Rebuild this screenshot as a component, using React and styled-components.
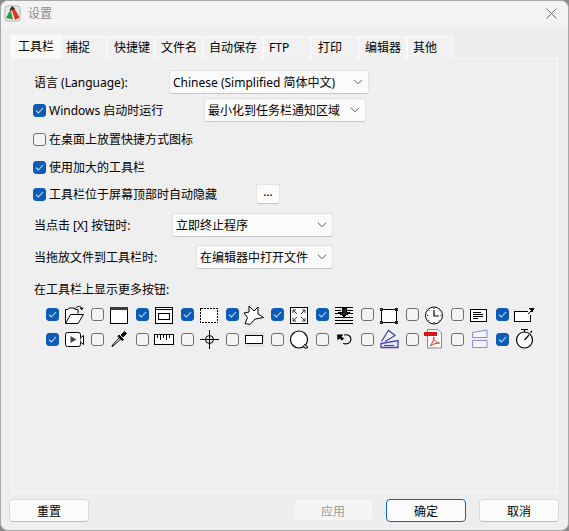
import React from "react";
import styled, { createGlobalStyle } from "styled-components";

const GlobalStyle = createGlobalStyle`
  html, body {
    margin: 0;
    padding: 0;
    height: 100%;
    background: #8a8a8a;
    overflow: hidden;
  }
  * { box-sizing: border-box; }
`;

const Dialog = styled.div`
  width: 569px;
  height: 531px;
  display: flex;
  flex-direction: column;
  background: #eeeeee;
  border: 1px solid #a8a8a8;
  border-radius: 8px;
  overflow: hidden;
  color: #000;
  font-family: "Noto Sans", "Noto Sans CJK SC", sans-serif;
  font-size: 12px;
`;

const TitleBar = styled.div`
  height: 26px;
  flex: none;
  display: flex;
  align-items: center;
  padding: 0 11px 2px 3px;
  gap: 7px;
  background: #f3f3f3;
`;

const TitleText = styled.span`
  color: #8c8c8c;
  font-size: 12px;
  flex: 1;
`;

const Tabs = styled.div`
  display: flex;
  height: 24px;
  margin-top: 8px;
  padding-left: 9px;
  flex: none;
  position: relative;
  z-index: 1;
`;

const Tab = styled.div`
  width: ${(p) => p.$w}px;
  height: ${(p) => (p.$active ? 24 : 23)}px;
  padding-left: ${(p) => p.$pad}px;
  padding-top: 2px;
  line-height: 18px;
  margin-top: ${(p) => (p.$active ? 0 : 1)}px;
  background: ${(p) => (p.$active ? "#f9f9f9" : "#f1f1f1")};
  border: 1px solid #f9f9f9;
  border-bottom: none;
  white-space: nowrap;
`;

const Panel = styled.div`
  height: 435px;
  margin: -1px 10px 0 11px;
  padding: 11px 0 0 21px;
  background: #efefef;
  border: 1px solid #f9f9f9;
  flex: none;
`;

const Row = styled.div`
  display: flex;
  align-items: center;
  height: 24px;
  margin-top: ${(p) => p.$top || 0}px;
`;

const Label = styled.span`
  width: ${(p) => p.$w}px;
  flex: none;
  white-space: nowrap;
`;

const CheckLabel = styled.label`
  display: flex;
  align-items: center;
  gap: 3px;
  margin-left: -1px;
  width: ${(p) => (p.$w ? `${p.$w}px` : "auto")};
  flex: none;
  white-space: nowrap;
`;

const Box = styled.span`
  width: 13px;
  height: 13px;
  flex: none;
  display: inline-flex;
  align-items: center;
  justify-content: center;
  border-radius: 3px;
  background: ${(p) => (p.$on ? "#0a5cb8" : "#f4f4f4")};
  border: 1px solid ${(p) => (p.$on ? "#0a5cb8" : "#6f6f6f")};
`;

const SelectBox = styled.div`
  width: ${(p) => p.$w}px;
  height: 24px;
  flex: none;
  display: flex;
  align-items: center;
  justify-content: space-between;
  padding: 0 5px 0 3px;
  background: #fbfbfb;
  border: 1px solid #e2e2e2;
  border-bottom-color: #c6c6c6;
  border-radius: 3px;
  white-space: nowrap;
`;

const MoreButton = styled.button`
  width: 24px;
  height: 20px;
  margin-left: 1px;
  padding: 0 0 5px;
  font: inherit;
  line-height: 12px;
  background: #fbfbfb;
  border: 1px solid #e2e2e2;
  border-bottom-color: #c6c6c6;
  border-radius: 3px;
`;

const ToolGrid = styled.div`
  display: grid;
  grid-template-columns: repeat(11, 45px);
  grid-auto-rows: 25px;
  margin: 1px 0 0 12px;
`;

const ToolCell = styled.div`
  display: flex;
  align-items: center;
  gap: 5px;
`;

const Footer = styled.div`
  display: flex;
  align-items: center;
  height: 23px;
  margin-top: 6px;
  padding: 0 9px 0 8px;
  gap: 13px;
`;

const Spacer = styled.div`
  flex: 1;
`;

const FooterButton = styled.button`
  width: 80px;
  height: 23px;
  font: inherit;
  padding: 0;
  color: ${(p) => (p.disabled ? "#9a9a9a" : "#000")};
  background: ${(p) => (p.disabled ? "#f5f5f5" : "#fbfbfb")};
  border: 1px solid ${(p) => (p.$primary ? "#0a66b8" : p.disabled ? "#ececec" : "#dadada")};
  border-bottom-color: ${(p) => (p.$primary ? "#0a66b8" : p.disabled ? "#ececec" : "#bdbdbd")};
  border-radius: 4px;
`;

const Chevron = () => (
  <svg width="10" height="6" viewBox="0 0 10 6" fill="none" stroke="#5a5a5a" strokeWidth="1">
    <path d="M1 .8 5 4.800 9 .8" />
  </svg>
);

const Check = () => (
  <svg width="9" height="7" viewBox="0 0 9 7" fill="none" stroke="#cfe0f4" strokeWidth="1.1">
    <path d="M1 3.600 3.400 6 8 1" />
  </svg>
);

const CheckBox = ({ on }) => <Box $on={on}>{on && <Check />}</Box>;

const Logo = () => (
  <svg width="17" height="17" viewBox="0 0 17 17">
    <rect x="1" y="1" width="15" height="15" rx="2.500" fill="#e8e8e8" stroke="#b5b5b5" />
    <path d="M2 13 6.500 4.500 9 14.500z" fill="#2f9c3a" />
    <path d="M7.500 4 10.500 3.500 15.500 12.500 11 15z" fill="#dc3426" />
    <path d="M5.500 5 8 1 11 3.500 7.500 5.500z" fill="#3a2a20" />
  </svg>
);

const CloseIcon = () => (
  <svg width="11" height="11" viewBox="0 0 11 11" stroke="#6a6a6a" strokeWidth="1" fill="none">
    <path d="M.5.5 10.500 10.500M10.500.5.5 10.500" />
  </svg>
);

const Ic = ({ children, crisp = true }) => (
  <svg
    width="20"
    height="20"
    viewBox="0 0 20 20"
    fill="none"
    stroke="#000"
    strokeWidth="1"
    overflow="visible"
    shapeRendering={crisp ? "crispEdges" : "auto"}
  >
    {children}
  </svg>
);

const row1 = [
  {
    on: true,
    icon: (
      <Ic crisp={false}>
        <path d="M1.500 18.500V4.500H4L5 3h5l1 1.500h3v4M1.500 18.500 6.500 9.500H19.500L14 18.500z" fill="#fff" />
        <path d="M11 4c1-2 4-3.500 6-2l1 2.500M16 3l2 1.500L19 2.500" />
      </Ic>
    ),
  },
  {
    on: false,
    icon: (
      <Ic>
        <rect x="1.500" y="2.500" width="17" height="16" fill="#fff" />
        <rect x="1" y="2" width="18" height="3" fill="#3a3a3a" stroke="none" />
      </Ic>
    ),
  },
  {
    on: true,
    icon: (
      <Ic>
        <rect x="1.500" y="2.500" width="17" height="16" fill="#fff" />
        <path d="M1.500 4.500h17" />
        <rect x="4.500" y="8.500" width="11" height="6" fill="#fff" />
      </Ic>
    ),
  },
  {
    on: true,
    icon: (
      <Ic>
        <rect x="1.500" y="3.500" width="17" height="14" fill="#fff" strokeDasharray="2 1" />
      </Ic>
    ),
  },
  {
    on: true,
    icon: (
      <Ic crisp={false}>
        <path d="M5 1 10 6 14 2 14 9 19.500 12.500 11 14 6 19.500 1 18.500 3.500 12.500 0 8 5 7z" fill="#fff" />
      </Ic>
    ),
  },
  {
    on: true,
    icon: (
      <Ic crisp={false}>
        <rect x="1.500" y="2.500" width="17" height="16" fill="#fff" />
        <path d="M4 5 8 9M16 5l-4 4M4 16l4-4M16 16l-4-4M4 8V5h3M13 5h3v3M4 13v3h3M13 16h3v-3" stroke="#333" />
      </Ic>
    ),
  },
  {
    on: true,
    icon: (
      <Ic>
        <path d="M1 2.500h18M1 5.500h6M13 5.500h6M1 8.500h6M13 8.500h6M1 12.500h18M1 15.500h18M1 18.500h18" />
        <path d="M8 3.500h4v4h3L10 12 5 7.500h3z" fill="#222" />
      </Ic>
    ),
  },
  {
    on: false,
    icon: (
      <Ic>
        <rect x="2.500" y="4.500" width="15" height="13" fill="#fff" />
        <path d="M1 3h3v3H1zM16 3h3v3h-3zM1 16h3v3H1zM16 16h3v3h-3z" fill="#222" stroke="none" />
      </Ic>
    ),
  },
  {
    on: false,
    icon: (
      <Ic crisp={false}>
        <circle cx="10" cy="10.500" r="8.500" fill="#fff" />
        <path d="M10 5v6h5" strokeWidth="1.200" />
        <path d="M10 3v1M10 17v1M3 10.500h1M16.500 10.500h1M4.800 5.300l.6.600M14.700 15.200l.6.600M4.800 15.800l.6-.6M14.700 5.900l.6-.6" />
      </Ic>
    ),
  },
  {
    on: false,
    icon: (
      <Ic>
        <rect x="1.500" y="4.500" width="16" height="12" fill="#fff" />
        <path d="M4 7.500h8M4 9.500h10M4 11.500h10M4 13.500h5" />
      </Ic>
    ),
  },
  {
    on: true,
    icon: (
      <Ic>
        <path d="M14 6.500H.5v10h16V10" fill="#fff" />
        <path d="M14 9l3-3" />
        <path d="M15 3h5l-1 5-1.500-1.500z" fill="#000" stroke="none" />
      </Ic>
    ),
  },
];

const row2 = [
  {
    on: true,
    icon: (
      <Ic crisp={false}>
        <rect x="1.500" y="2.500" width="15" height="14" rx="2" fill="#fff" />
        <path d="M6.500 6v7l6-3.500z" fill="#444" stroke="none" />
        <path d="M16.500 8l3-2.500v9l-3-2.500" fill="#fff" />
      </Ic>
    ),
  },
  {
    on: false,
    icon: (
      <Ic crisp={false}>
        <path d="M4 16l-1 .5.500-1.500L11 7l1.500 1.500z" fill="#fff" />
        <path d="M10 5l4.500 4.500-1.500 1L9 6.500z" fill="#111" />
        <path d="M12 5l3.500-3.500 2 2L14 7z" fill="#111" />
      </Ic>
    ),
  },
  {
    on: false,
    icon: (
      <Ic>
        <rect x="0.500" y="4.500" width="19" height="10" fill="#fff" />
        <path d="M3.500 5v3M6.500 5v5M9.500 5v3M12.500 5v5M15.500 5v3" />
      </Ic>
    ),
  },
  {
    on: false,
    icon: (
      <Ic crisp={false}>
        <path d="M1 9.500h19M10.500 0v19" />
        <circle cx="10.500" cy="9.500" r="4" />
      </Ic>
    ),
  },
  {
    on: false,
    icon: (
      <Ic>
        <rect x="0.500" y="2" width="19" height="15" fill="#e2e2e2" stroke="none" />
        <rect x="1.500" y="5.500" width="17" height="8" fill="#fff" />
        <path d="M1 13.500h18" strokeWidth="1" />
      </Ic>
    ),
  },
  {
    on: false,
    icon: (
      <Ic crisp={false}>
        <circle cx="10" cy="9.500" r="8.500" fill="#fff" strokeWidth="1.200" />
        <path d="M14.500 15.500l1 2.500h3l-.5-2-3-1.500" fill="#fff" />
      </Ic>
    ),
  },
  {
    on: false,
    icon: (
      <Ic crisp={false}>
        <path d="M10 5c4-1 7 1 7 4.500s-4 5-8 4" strokeWidth="1.100" />
        <path d="M3 4.500h6.500l-2 2 2.500 2-2 2-2.500-2-2 2z" fill="#000" stroke="none" />
      </Ic>
    ),
  },
  {
    on: false,
    icon: (
      <Ic crisp={false}>
        <path d="M2 17.500v-4l17-3v7z" fill="#e8e8fa" stroke="#4040b8" strokeWidth="1.300" />
        <path d="M2.500 11.500 9.500.5 16 5.500l-10 6" stroke="#4040b8" strokeWidth="1.300" fill="#fff" />
        <path d="M5 15.500h10" stroke="#4040b8" />
      </Ic>
    ),
  },
  {
    on: false,
    icon: (
      <Ic crisp={false}>
        <path d="M3.500-.5H14L17.500 3v15h-14z" fill="#fafafa" stroke="#8a8a8a" />
        <path d="M6 16c2-2 4-6 3.500-9 1 4 3 6 6 6-3 0-6 1-9.500 3z" stroke="#d8352a" />
        <rect x="0" y="2" width="13" height="4" fill="#d81818" stroke="none" />
      </Ic>
    ),
  },
  {
    on: false,
    icon: (
      <Ic crisp={false}>
        <path d="M3.500 2.500 18 0v7.500H3.500zM3.500 10.500H18v7H3.500z" fill="#f4f4fc" stroke="#8a8ae0" />
      </Ic>
    ),
  },
  {
    on: true,
    icon: (
      <Ic crisp={false}>
        <circle cx="10.500" cy="10" r="8" fill="#fff" strokeWidth="1.200" />
        <path d="M7-.5h7M10.500-.5V2M16.500 2.500 18 1M10.500 10 15 5" strokeWidth="1.200" />
      </Ic>
    ),
  },
];

const tabs = [
  ["工具栏", 51, 7],
  ["捕捉", 46, 4],
  ["快捷键", 48, 6],
  ["文件名", 48, 5],
  ["自动保存", 60, 5],
  ["FTP", 48, 5],
  ["打印", 48, 6],
  ["编辑器", 48, 5],
  ["其他", 46, 5],
];

export default function App() {
  return (
    <>
      <GlobalStyle />
      <Dialog>
        <TitleBar>
          <Logo />
          <TitleText>设置</TitleText>
          <CloseIcon />
        </TitleBar>
        <Tabs>
          {tabs.map(([name, w, pad], i) => (
            <Tab key={name} $w={w} $pad={pad} $active={i === 0}>
              {name}
            </Tab>
          ))}
        </Tabs>
        <Panel>
          <Row>
            <Label $w={135}>语言 (Language):</Label>
            <SelectBox $w={200}>
              Chinese (Simplified 简体中文)
              <Chevron />
            </SelectBox>
          </Row>
          <Row $top={4}>
            <CheckLabel $w={171}>
              <CheckBox on />
              Windows 启动时运行
            </CheckLabel>
            <SelectBox $w={162}>
              最小化到任务栏通知区域
              <Chevron />
            </SelectBox>
          </Row>
          <Row $top={5}>
            <CheckLabel>
              <CheckBox />
              在桌面上放置快捷方式图标
            </CheckLabel>
          </Row>
          <Row $top={4}>
            <CheckLabel>
              <CheckBox on />
              使用加大的工具栏
            </CheckLabel>
          </Row>
          <Row $top={3}>
            <CheckLabel $w={222}>
              <CheckBox on />
              工具栏位于屏幕顶部时自动隐藏
            </CheckLabel>
            <MoreButton>...</MoreButton>
          </Row>
          <Row $top={7}>
            <Label $w={138}>当点击 [X] 按钮时:</Label>
            <SelectBox $w={161}>
              立即终止程序
              <Chevron />
            </SelectBox>
          </Row>
          <Row $top={8}>
            <Label $w={162}>当拖放文件到工具栏时:</Label>
            <SelectBox $w={137}>
              在编辑器中打开文件
              <Chevron />
            </SelectBox>
          </Row>
          <Row $top={8}>
            <Label $w={200}>在工具栏上显示更多按钮:</Label>
          </Row>
          <ToolGrid>
            {[...row1, ...row2].map((t, i) => (
              <ToolCell key={i}>
                <CheckBox on={t.on} />
                {t.icon}
              </ToolCell>
            ))}
          </ToolGrid>
        </Panel>
        <Footer>
          <FooterButton>重置</FooterButton>
          <Spacer />
          <FooterButton disabled>应用</FooterButton>
          <FooterButton $primary>确定</FooterButton>
          <FooterButton>取消</FooterButton>
        </Footer>
      </Dialog>
    </>
  );
}
